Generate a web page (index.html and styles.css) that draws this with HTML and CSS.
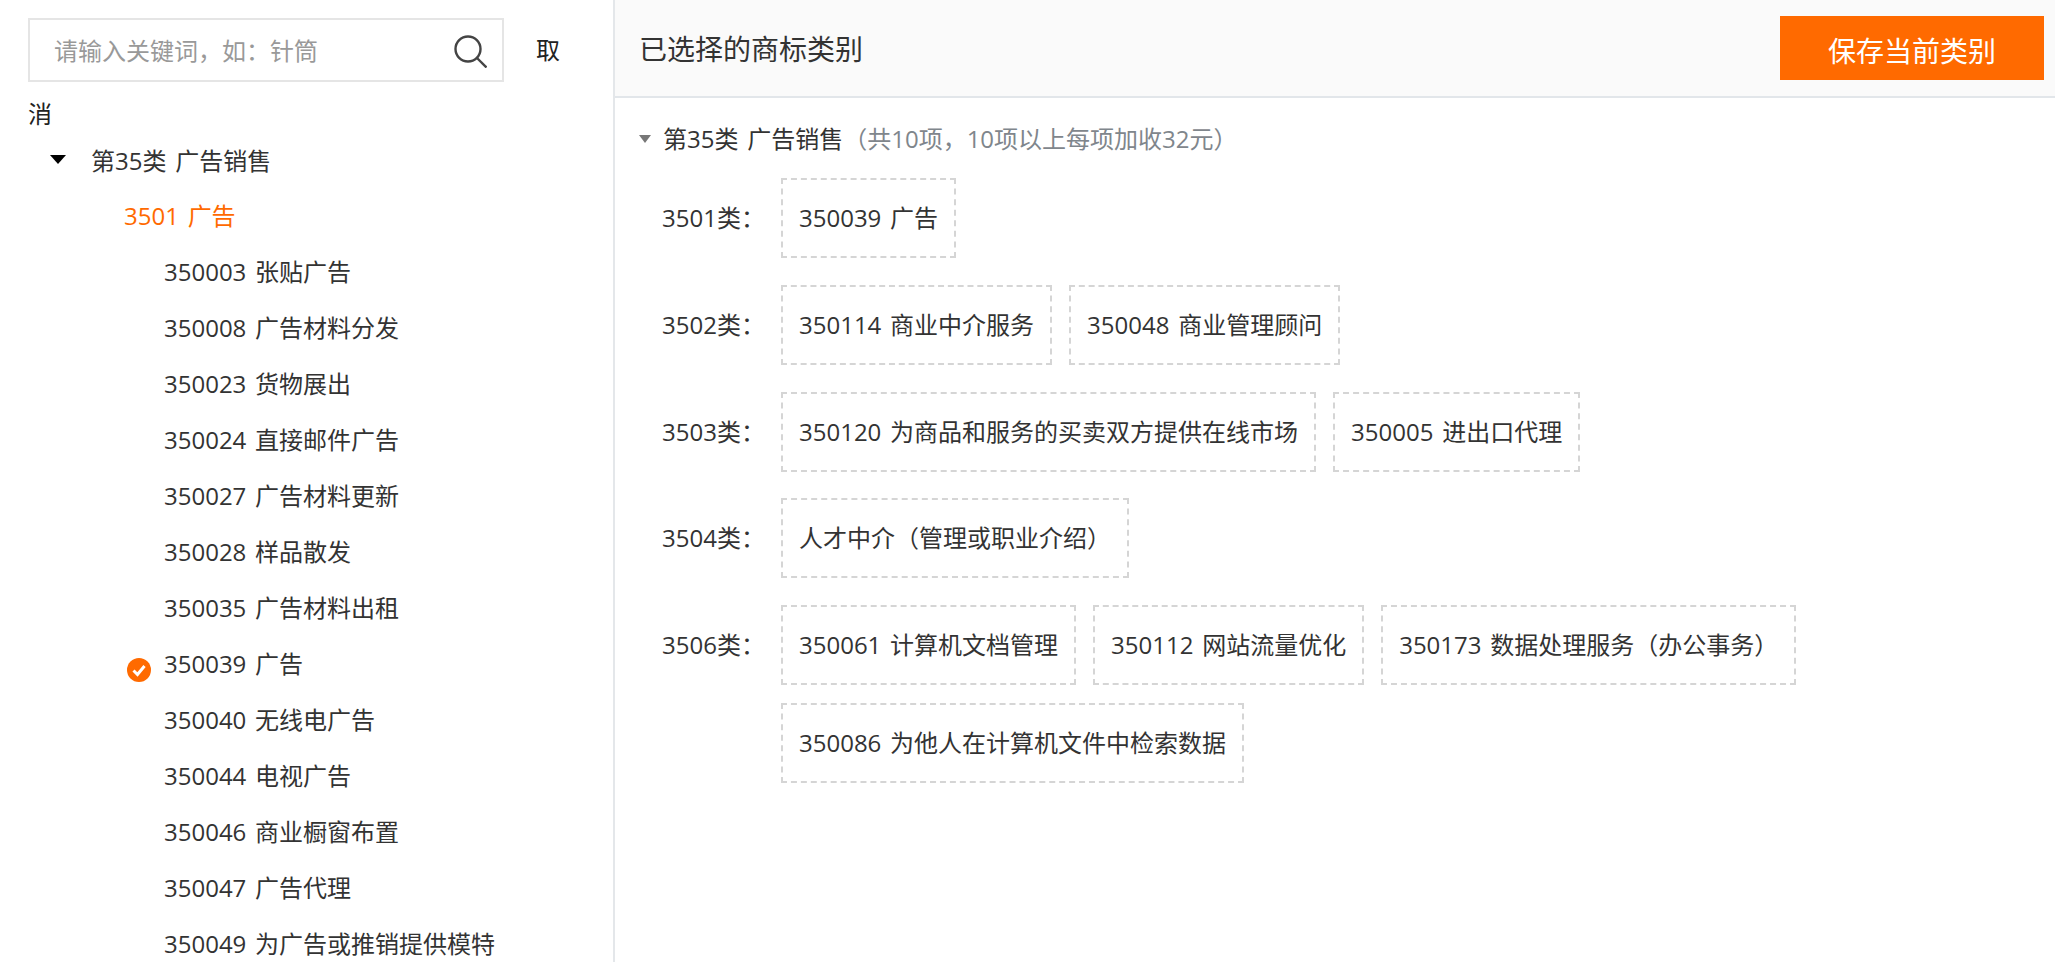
FILE: index.html
```html
<!DOCTYPE html>
<html lang="zh-CN">
<head>
<meta charset="utf-8">
<title>已选择的商标类别</title>
<link rel="stylesheet" href="styles.css">
</head>
<body>
<div class="page">
  <aside class="left">
    <div class="search">
      <div class="input">
        <span class="placeholder">请输入关键词，如：针筒</span>
        <svg class="search-icon" width="33" height="33" viewBox="0 0 33 33"><circle cx="14" cy="14" r="12.5" fill="none" stroke="#444" stroke-width="2.4"/><path d="M23 23l9.5 9.5" fill="none" stroke="#444" stroke-width="2.4"/></svg>
      </div><a class="cancel">取消</a>
    </div>
    <div class="cat">
      <svg class="tri" width="16" height="9" viewBox="0 0 16 9"><path d="M0 0h16L8 9z" fill="#000"/></svg>
      <span>第35类 广告销售</span>
    </div>
    <div class="sub">3501 广告</div>
    <div class="leaf">350003 张贴广告</div>
    <div class="leaf">350008 广告材料分发</div>
    <div class="leaf">350023 货物展出</div>
    <div class="leaf">350024 直接邮件广告</div>
    <div class="leaf">350027 广告材料更新</div>
    <div class="leaf">350028 样品散发</div>
    <div class="leaf">350035 广告材料出租</div>
    <div class="leaf">
      <svg class="check" width="24" height="24" viewBox="0 0 24 24"><circle cx="12" cy="12" r="12" fill="#ff6a00"/><path d="M6.5 12.5l4 4L17.5 8" fill="none" stroke="#fff" stroke-width="3"/></svg>
      350039 广告
    </div>
    <div class="leaf">350040 无线电广告</div>
    <div class="leaf">350044 电视广告</div>
    <div class="leaf">350046 商业橱窗布置</div>
    <div class="leaf">350047 广告代理</div>
    <div class="leaf">350049 为广告或推销提供模特</div>
  </aside>
  <main class="right">
    <header class="head">
      <h1 class="title">已选择的商标类别</h1>
      <button class="save">保存当前类别</button>
    </header>
    <section class="section">
      <div class="section-head">
        <svg class="arrow" width="12" height="8" viewBox="0 0 12 8"><path d="M0 0h12L6 8z" fill="#777"/></svg>
        <span>第35类 广告销售</span><span class="note">（共10项，10项以上每项加收32元）</span>
      </div>
      <div class="row">
        <div class="label">3501类：</div>
        <div class="chips"><div class="chip">350039 广告</div></div>
      </div>
      <div class="row">
        <div class="label">3502类：</div>
        <div class="chips"><div class="chip">350114 商业中介服务</div><div class="chip">350048 商业管理顾问</div></div>
      </div>
      <div class="row">
        <div class="label">3503类：</div>
        <div class="chips"><div class="chip">350120 为商品和服务的买卖双方提供在线市场</div><div class="chip">350005 进出口代理</div></div>
      </div>
      <div class="row">
        <div class="label">3504类：</div>
        <div class="chips"><div class="chip">人才中介（管理或职业介绍）</div></div>
      </div>
      <div class="row">
        <div class="label">3506类：</div>
        <div class="chips"><div class="chip">350061 计算机文档管理</div><div class="chip">350112 网站流量优化</div><div class="chip">350173 数据处理服务（办公事务）</div><div class="chip">350086 为他人在计算机文件中检索数据</div></div>
      </div>
    </section>
  </main>
</div>
</body>
</html>
```

FILE: styles.css
```css
* { box-sizing: border-box; }
html, body { margin: 0; height: 100%; overflow: hidden; background: #fff; }
body {
  font-family: "Open Sans", "Noto Sans CJK SC", sans-serif;
  font-size: 24px;
  color: #333;
  word-spacing: 2.5px;
}
.page { display: flex; height: 962px; overflow: hidden; }

.left {
  width: 613px;
  flex: none;
  padding: 18px 30px 0 28px;
  overflow: hidden;
}
.search { line-height: 64px; color: #222; }
.input {
  display: inline-flex;
  vertical-align: top;
  align-items: center;
  justify-content: space-between;
  width: 476px;
  height: 64px;
  border: 2px solid #e5e5e5;
  padding: 0 15px 0 24px;
}
.placeholder { color: #999; line-height: 1; margin-top: 2px; }
.search-icon { display: block; margin-top: 3px; }
.cancel { margin-left: 32px; }

.cat {
  display: flex;
  align-items: center;
  height: 30px;
  margin: -2px 0 14px;
  padding-left: 22px;
}
.tri { margin: 1px 25px 0 0; }
.sub { height: 56px; line-height: 56px; padding-left: 96px; color: #ff6a00; }
.leaf { position: relative; height: 56px; line-height: 56px; padding-left: 136px; white-space: nowrap; }
.check { position: absolute; left: 99px; top: 22px; }

.right { flex: 1; border-left: 2px solid #e4e7ea; min-width: 0; }
.head {
  display: flex;
  align-items: center;
  justify-content: space-between;
  height: 98px;
  padding: 0 11px 0 24px;
  background: #fafafa;
  border-bottom: 2px solid #e2e6ea;
}
.title { margin: 3px 0 0; font-size: 28px; font-weight: 400; color: #333; line-height: 1.2; }
.save {
  width: 264px;
  height: 64px;
  border: 0;
  background: #ff6a00;
  color: #fff;
  font: inherit;
  font-size: 28px;
  padding: 4px 0 0;
}

.section { padding: 24px 0 0 24px; }
.section-head { display: flex; align-items: center; height: 34px; margin-bottom: 22px; line-height: 34px; }
.arrow { margin-right: 12px; margin-bottom: 1px; }
.note { color: #7f868c; }

.row { display: flex; padding-left: 23px; margin-bottom: 26.75px; }
.label { width: 119px; flex: none; line-height: 80px; }
.chips { display: flex; flex-wrap: wrap; gap: 18px 17px; flex: 1; }
.chip {
  height: 80px;
  line-height: 76px;
  padding: 0 16px;
  border: 2px dashed #d5d5d5;
  white-space: nowrap;
}
```
